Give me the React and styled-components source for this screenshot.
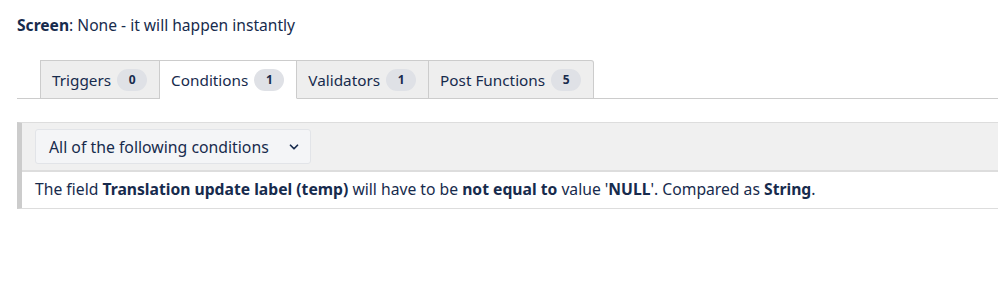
import React from 'react'
import styled, { createGlobalStyle } from 'styled-components'

const Global = createGlobalStyle`
  html, body {
    margin: 0;
    background: #fff;
    overflow: hidden;
  }
  body {
    font-family: "Noto Sans", "Open Sans", sans-serif;
    color: #172b4d;
  }
`

const Page = styled.div`
  width: 1010px;
  padding: 14px 0 0 17px;
`

const ScreenLine = styled.p`
  margin: 0;
  font-size: 15.6px;
  line-height: 22px;

  b {
    font-weight: 700;
  }
`

const TabBar = styled.div`
  display: flex;
  margin-top: 24px;
  padding-left: 23px;
  border-bottom: 1px solid #cccccc;
`

const Tab = styled.div`
  display: flex;
  align-items: center;
  gap: 6px;
  height: 37px;
  padding: 0 12px 0 11px;
  margin-bottom: -1px;
  font-size: 15.3px;
  background: ${p => (p.$active ? '#fff' : '#eeeeee')};
  border: 1px solid #cccccc;
  border-bottom: 1px solid ${p => (p.$active ? '#fff' : '#cccccc')};
  border-left: ${p => (p.$first ? '1px solid #cccccc' : 'none')};
  border-top-right-radius: ${p => (p.$last ? '3px' : '0')};
`

const Badge = styled.span`
  display: inline-flex;
  align-items: center;
  justify-content: center;
  min-width: 30px;
  height: 22px;
  border-radius: 11px;
  background: #dfe1e6;
  font-size: 12px;
  font-weight: 700;
`

const Panel = styled.div`
  margin-top: 23px;
  border: 1px solid #dddddd;
  border-left: 5px solid #cccccc;
  border-right: none;
`

const PanelHead = styled.div`
  display: flex;
  background: #f0f0f0;
  padding: 6px 13px 6px;
  border-bottom: 2px solid #dddddd;
`

const Select = styled.div`
  display: flex;
  align-items: center;
  justify-content: space-between;
  width: 276px;
  height: 35px;
  box-sizing: border-box;
  padding: 0 9px 0 13px;
  background: #f4f5f7;
  border: 1px solid #e2e4e8;
  border-radius: 3px;
  font-size: 15.8px;
`

const Condition = styled.div`
  padding: 7px 13px 9px;
  font-size: 15.7px;
  line-height: 20px;

  b {
    font-weight: 700;
  }
`

const tabs = [
  { label: 'Triggers', count: 0 },
  { label: 'Conditions', count: 1, active: true },
  { label: 'Validators', count: 1 },
  { label: 'Post Functions', count: 5 },
]

export default function App() {
  return (
    <Page>
      <Global />
      <ScreenLine>
        <b>Screen</b>: None - it will happen instantly
      </ScreenLine>

      <TabBar>
        {tabs.map((t, i) => (
          <Tab key={t.label} $active={t.active} $first={i === 0} $last={i === tabs.length - 1}>
            {t.label}
            <Badge>{t.count}</Badge>
          </Tab>
        ))}
      </TabBar>

      <Panel>
        <PanelHead>
          <Select>
            All of the following conditions
            <svg width="14" height="14" viewBox="0 0 24 24" fill="none" stroke="#172b4d" strokeWidth="3" strokeLinecap="round" strokeLinejoin="round">
              <path d="M6 9l6 6 6-6" />
            </svg>
          </Select>
        </PanelHead>
        <Condition>
          The field <b>Translation update label (temp)</b> will have to be <b>not equal to</b> value '<b>NULL</b>'. Compared as <b>String</b>.
        </Condition>
      </Panel>
    </Page>
  )
}
